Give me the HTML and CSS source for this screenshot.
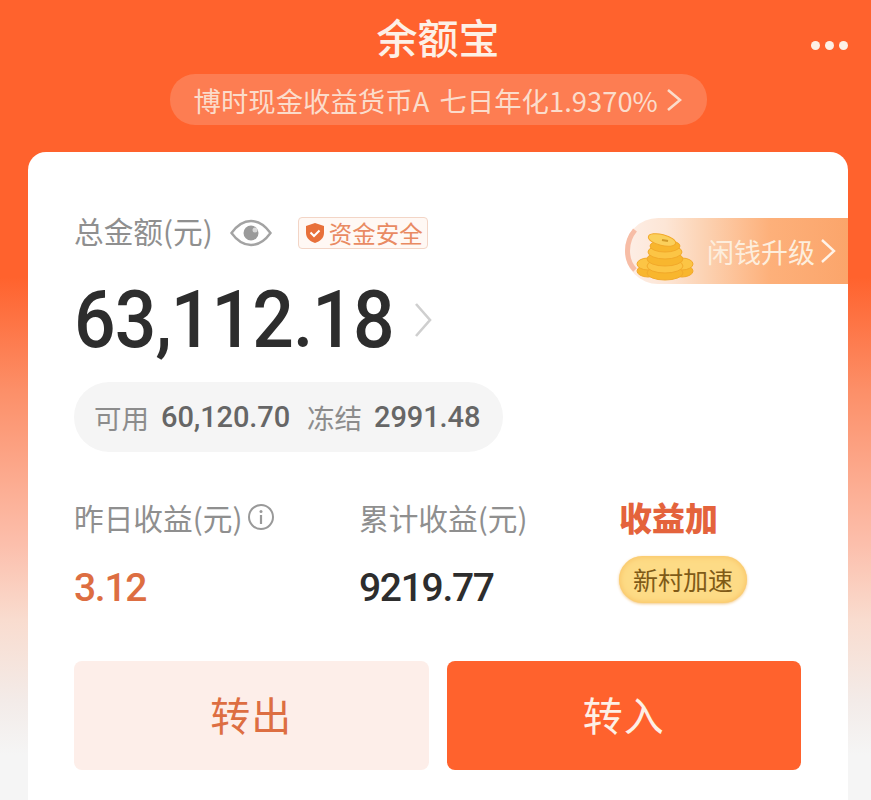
FILE: index.html
```html
<!DOCTYPE html>
<html lang="zh-CN">
<head>
  <meta charset="UTF-8" />
  <title>余额宝</title>
  <link rel="stylesheet" href="styles.css">
</head>
<body>
  <div class="header">
    <h1 class="title">余额宝</h1>
    <div class="more"><i></i><i></i><i></i></div>
    <div class="fund-pill">
      <span>博时现金收益货币A 七日年化1.9370%</span>
      <svg class="fund-arrow" width="16" height="24" viewBox="0 0 16 24"><path d="M2 2l12 10L2 22" fill="none" stroke="#fbdccb" stroke-width="2.6"/></svg>
    </div>
  </div>

  <div class="card">
    <!-- upgrade banner sits over the card edge -->
    <div class="upgrade">
      <svg class="coins" width="70" height="66" viewBox="0 0 70 66">
        <path d="M10 12C0 24 0 42 10 52" fill="none" stroke="#f7bda6" stroke-width="5"/>
        <g stroke="#f2a92a" stroke-width="1">
          <ellipse cx="23" cy="53" rx="11" ry="6" fill="#f8b62e"/>
          <ellipse cx="57" cy="53" rx="11" ry="6" fill="#f8b62e"/>
          <ellipse cx="23" cy="46" rx="11" ry="6" fill="#fcc545"/>
          <ellipse cx="57" cy="46" rx="11" ry="6" fill="#fcc545"/>
          <ellipse cx="40" cy="55" rx="18" ry="7" fill="#f8b62e"/>
          <ellipse cx="40" cy="48" rx="18" ry="7" fill="#fcc545"/>
          <ellipse cx="40" cy="41" rx="18" ry="7" fill="#f8b62e"/>
          <ellipse cx="40" cy="34" rx="17" ry="7" fill="#fcc545"/>
          <ellipse cx="40" cy="28" rx="15" ry="6" fill="#f8b62e"/>
          <ellipse cx="37" cy="22" rx="14" ry="5.500" fill="#fbd05c" transform="rotate(14 37 22)"/>
        </g>
        <path d="M37 22l6 1" stroke="#d29a28" stroke-width="2"/>
      </svg>
      <span class="upgrade-text">闲钱升级</span>
      <svg width="16" height="26" viewBox="0 0 16 26"><path d="M2 2l12 11L2 24" fill="none" stroke="#fff3e8" stroke-width="2.4"/></svg>
    </div>

    <div class="total-label">
      <span class="total-text">总金额(元)</span>
      <svg class="eye" width="42" height="28" viewBox="0 0 42 28">
        <path d="M1.500 14C8 5 14 2 21 2S34 5 40.500 14C34 23 28 26 21 26S8 23 1.500 14Z" fill="none" stroke="#a3a3a3" stroke-width="2.400"/>
        <circle cx="21" cy="14" r="7.500" fill="#9a9a9a"/>
        <circle cx="25" cy="11" r="2.500" fill="#d8d8d8"/>
      </svg>
      <div class="safe-tag">
        <svg width="20" height="22" viewBox="0 0 20 22">
          <path d="M10 1l9 3v7c0 5-4 8.500-9 10C5 19.500 1 16 1 11V4z" fill="#e8703a"/>
          <path d="M5.500 10.500l3.500 3.500 5.500-5.500" fill="none" stroke="#fff" stroke-width="2"/>
        </svg>
        <span>资金安全</span>
      </div>
    </div>

    <div class="total-row">
      <span class="total-num">63,112.18</span>
      <svg width="18" height="36" viewBox="0 0 18 36"><path d="M2 2l14 16L2 34" fill="none" stroke="#cfcfcf" stroke-width="2.600"/></svg>
    </div>

    <div class="balance-pill">
      <span class="bal-label">可用</span><b class="bal-num">60,120.70</b>
      <span class="bal-label bal-second">冻结</span><b class="bal-num">2991.48</b>
    </div>

    <div class="stats">
      <div class="stat stat-first">
        <div class="stat-label">昨日收益(元)
          <svg class="info" width="28" height="28" viewBox="0 0 28 28">
            <circle cx="14" cy="14" r="12" fill="none" stroke="#999" stroke-width="2"/>
            <circle cx="14" cy="8.500" r="1.500" fill="#999"/>
            <path d="M14 12v9" stroke="#999" stroke-width="2.200"/>
          </svg>
        </div>
        <div class="stat-num orange">3.12</div>
      </div>
      <div class="stat stat-second">
        <div class="stat-label">累计收益(元)</div>
        <div class="stat-num">9219.77</div>
      </div>
      <div class="stat">
        <div class="boost-title">收益加</div>
        <div class="boost-btn">新村加速</div>
      </div>
    </div>

    <div class="actions">
      <button class="btn btn-out">转出</button>
      <button class="btn btn-in">转入</button>
    </div>
  </div>
</body>
</html>
```

FILE: styles.css
```css
* {
  box-sizing: border-box;
  margin: 0;
  padding: 0;
}

html, body {
  height: 800px;
  overflow: hidden;
}

body {
  font-family: "Noto Sans CJK SC", "Noto Sans", sans-serif;
  background: linear-gradient(180deg, #ff622d 0, #ff622d 277px, #fc8f68 390px, #fcbfac 545px, #f9dccf 620px, #f3ebe8 700px, #f5f5f5 755px);
  padding: 0 23px 0 28px;
}

.header {
  position: relative;
  height: 152px;
  display: flex;
  flex-direction: column;
  align-items: center;
}

.title {
  font-size: 41px;
  font-weight: 500;
  line-height: 60px;
  padding-top: 6px;
  height: 74px;
  color: #fdf0e6;
}

.more {
  position: absolute;
  right: 0;
  top: 41px;
  display: flex;
  gap: 5px;
}

.more i {
  width: 9px;
  height: 9px;
  border-radius: 50%;
  background: #fdf0e6;
}

.fund-pill {
  width: 537px;
  height: 51px;
  border-radius: 25px;
  background: #fd7d52;
  display: flex;
  align-items: center;
  padding-left: 24px;
  color: #fbdccb;
  font-size: 27.400px;
  word-spacing: 4px;
  white-space: nowrap;
}

.fund-arrow {
  margin-left: 8px;
}

.card {
  position: relative;
  width: 820px;
  height: 648px;
  background: #fff;
  border-radius: 18px 18px 0 0;
  padding: 60px 47px 0 46px;
}

.upgrade {
  position: absolute;
  top: 66px;
  right: 0;
  width: 223px;
  height: 66px;
  border-radius: 33px 0 0 33px;
  background: linear-gradient(90deg, #fdeee6 0%, #fde6d6 18%, #fcd3b4 35%, #fdb07a 65%, #fba56b 100%);
  display: flex;
  align-items: center;
}

.coins {
  flex: none;
}

.upgrade-text {
  margin-left: 12px;
  margin-right: 5px;
  font-size: 27px;
  color: #fdeedd;
  white-space: nowrap;
}

.total-label {
  display: flex;
  align-items: center;
  height: 42px;
  color: #8f8f8f;
  font-size: 29.700px;
}

.total-text {
  padding-bottom: 5px;
}

.eye {
  margin-left: 17px;
}

.safe-tag {
  margin-left: 26px;
  width: 130px;
  height: 32px;
  border: 1.500px solid #f3d5c6;
  border-radius: 4px;
  background: #fff8f4;
  display: flex;
  align-items: center;
  padding-left: 6px;
  gap: 4px;
  font-size: 23.500px;
  color: #e98a62;
  white-space: nowrap;
}

.total-row {
  display: flex;
  align-items: center;
  height: 94px;
  margin-top: 19px;
}

/* digits in the shot are narrower than Roboto */
.total-num {
  font-family: Roboto, sans-serif;
  font-weight: 500;
  font-size: 80px;
  letter-spacing: -1px;
  color: #2d2d2d;
  transform: scaleX(0.915);
  transform-origin: left center;
  margin-right: -29px;
}

.total-row svg {
  margin-left: 20px;
}

.balance-pill {
  width: 429px;
  height: 70px;
  margin-top: 15px;
  border-radius: 35px;
  background: #f5f5f5;
  display: flex;
  align-items: center;
  padding-left: 20px;
  white-space: nowrap;
}

.bal-label {
  font-size: 27.500px;
  color: #8c8c8c;
}

.bal-second {
  margin-left: 17px;
}

.bal-num {
  margin-left: 12px;
  font-family: Roboto, sans-serif;
  font-weight: 500;
  font-size: 29px;
  letter-spacing: -0.100px;
  color: #666;
}

.stats {
  display: flex;
  margin-top: 41px;
}

.stat-first {
  width: 285px;
}

.stat-second {
  width: 260px;
}

.stat-label {
  display: flex;
  align-items: center;
  height: 48px;
  font-size: 29.700px;
  color: #8f8f8f;
  white-space: nowrap;
}

.info {
  margin-left: 4px;
}

.stat-num {
  margin-top: 23px;
  font-family: Roboto, sans-serif;
  font-weight: 500;
  font-size: 39px;
  letter-spacing: -1.300px;
  line-height: 48px;
  color: #2d2d2d;
}

.orange {
  color: #dd6e42;
}

.boost-title {
  height: 48px;
  line-height: 48px;
  font-size: 33px;
  font-weight: 900;
  color: #e4633c;
}

.boost-btn {
  width: 128px;
  height: 47px;
  margin-top: 15px;
  border-radius: 24px;
  background: #fddb86;
  box-shadow: 0 1px 3px #f2c98a, inset 0 0 6px #f8bd5c;
  text-align: center;
  line-height: 47px;
  font-size: 25px;
  color: #7f5a17;
}

.actions {
  display: flex;
  gap: 18px;
  margin-top: 49px;
}

.btn {
  width: 355px;
  height: 109px;
  border: none;
  border-radius: 8px;
  font-family: inherit;
  font-size: 40px;
  letter-spacing: 1px;
  padding-bottom: 4px;
}

.btn-out {
  background: #fdeee9;
  color: #dd6e42;
}

.btn-in {
  background: #ff622d;
  color: #fdf0e6;
}
```
